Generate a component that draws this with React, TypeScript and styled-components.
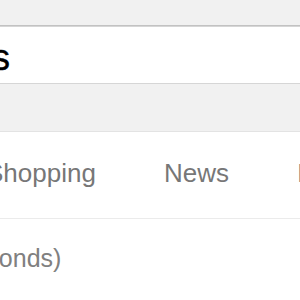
import React from "react";
import styled, { createGlobalStyle } from "styled-components";

const Global = createGlobalStyle`
  html, body { margin: 0; padding: 0; background: #ffffff; }
  body { overflow: hidden; font-family: "Liberation Sans", Arial, Helvetica, sans-serif; }
`;

const Page = styled.div`
  width: 300px;
  height: 300px;
  overflow: hidden;
  display: flex;
  flex-direction: column;
  background: #ffffff;
`;

const TopStrip = styled.div`
  height: 25px;
  flex: none;
  background: #f1f1f1;
  border-bottom: 1px solid #c2c2c2;
`;

const SearchRow = styled.div`
  height: 56px;
  flex: none;
  display: flex;
  align-items: center;
  background: #ffffff;
  border-top: 1px solid #d6d6d6;
  border-bottom: 1px solid #d6d6d6;
  overflow: hidden;
`;

const Query = styled.span`
  margin-left: -8px;
  margin-top: 6px;
  font-size: 36px;
  line-height: 36px;
  color: #000000;
  -webkit-text-stroke: 0.4px #000000;
  white-space: nowrap;
`;

const Band = styled.div`
  height: 47px;
  flex: none;
  background: #f1f1f1;
  border-bottom: 1px solid #e3e3e3;
`;

const Tabs = styled.nav`
  height: 87px;
  flex: none;
  display: flex;
  align-items: flex-start;
  gap: 68px;
  padding-top: 28px;
  box-sizing: border-box;
  border-bottom: 1px solid #ebebeb;
  margin-left: -14px;
  white-space: nowrap;
`;

const Tab = styled.span`
  font-size: 26px;
  line-height: 26px;
  color: #777777;
`;

const Stats = styled.div`
  padding-top: 27px;
  margin-left: -104px;
  font-size: 25px;
  line-height: 25px;
  color: #808080;
  white-space: nowrap;
`;

export default function App() {
  return (
    <>
      <Global />
      <Page>
        <TopStrip />
        <SearchRow>
          <Query>s</Query>
        </SearchRow>
        <Band />
        <Tabs>
          <Tab>Shopping</Tab>
          <Tab>News</Tab>
          <Tab>Images</Tab>
        </Tabs>
        <Stats>(0.42 seconds)</Stats>
      </Page>
    </>
  );
}
